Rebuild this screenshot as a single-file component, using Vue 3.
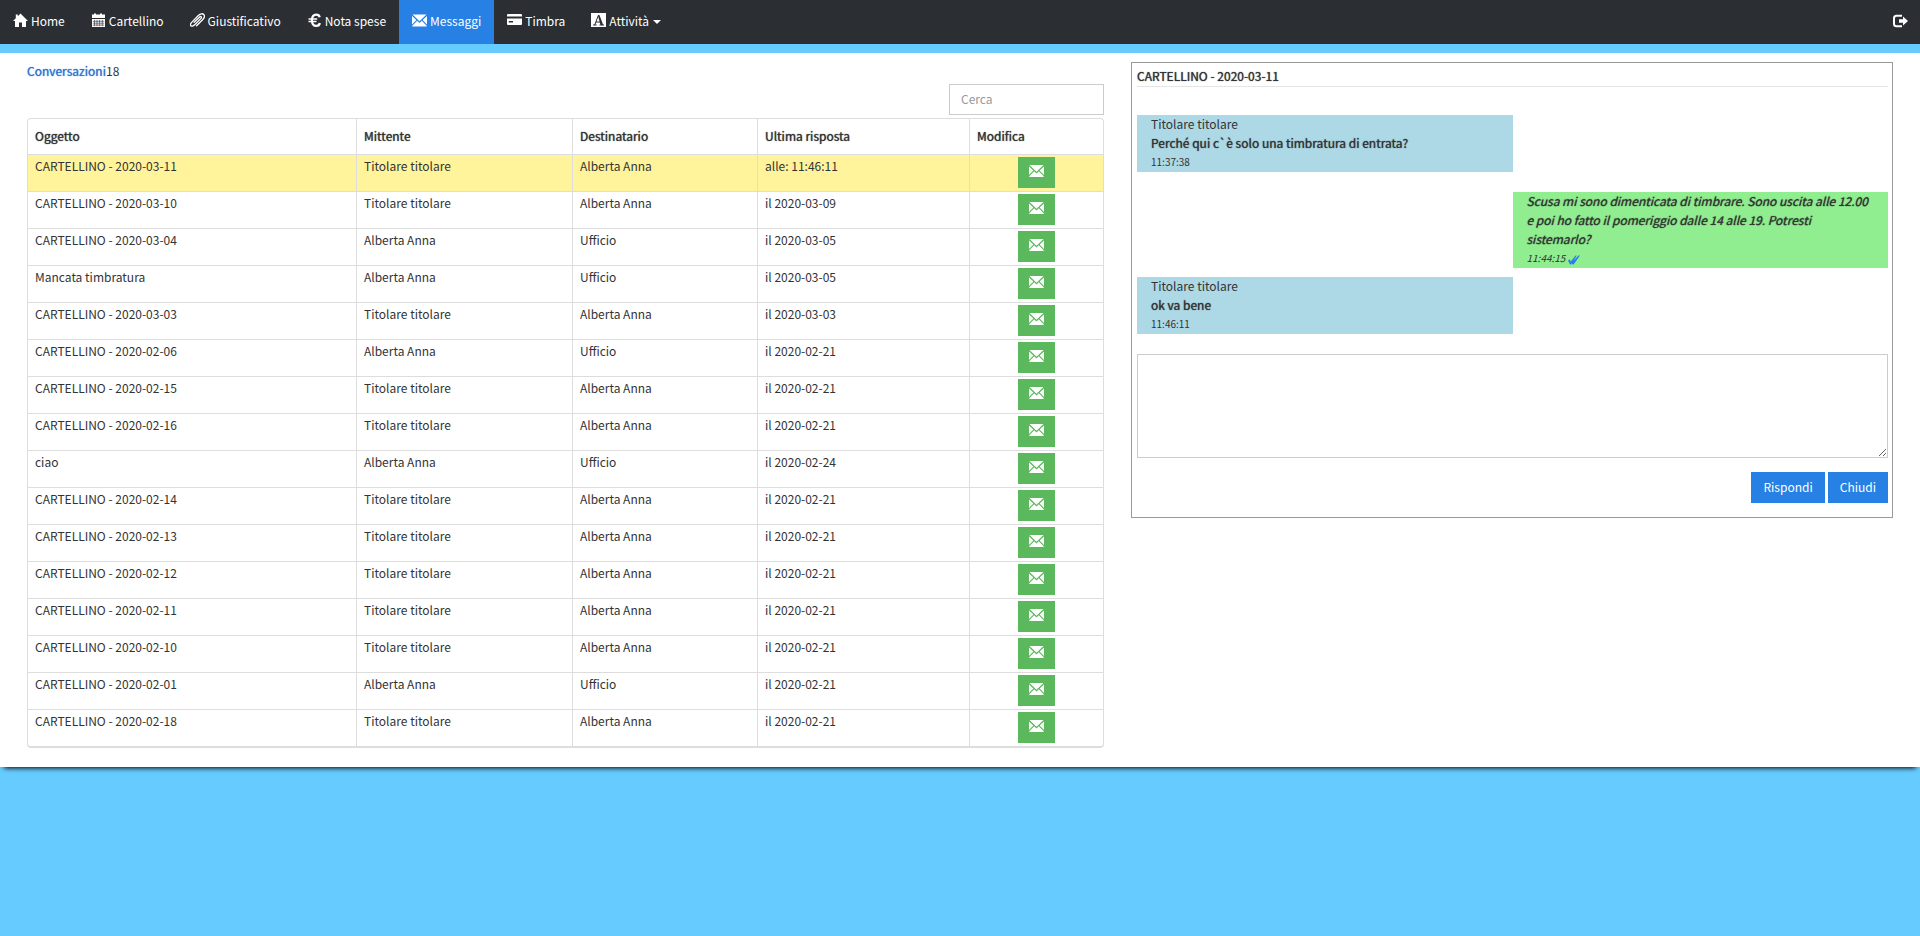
<script setup>
import { ref } from 'vue'

const navItems = [
  { label: 'Home', icon: 'home' },
  { label: 'Cartellino', icon: 'calendar' },
  { label: 'Giustificativo', icon: 'clip' },
  { label: 'Nota spese', icon: 'euro' },
  { label: 'Messaggi', icon: 'envelope', active: true },
  { label: 'Timbra', icon: 'card' },
  { label: 'Attività', icon: 'letter', menu: true }
]

const T = 'Titolare titolare'
const A = 'Alberta Anna'
const U = 'Ufficio'
const rows = [
  ['CARTELLINO - 2020-03-11', T, A, 'alle: 11:46:11'],
  ['CARTELLINO - 2020-03-10', T, A, 'il 2020-03-09'],
  ['CARTELLINO - 2020-03-04', A, U, 'il 2020-03-05'],
  ['Mancata timbratura', A, U, 'il 2020-03-05'],
  ['CARTELLINO - 2020-03-03', T, A, 'il 2020-03-03'],
  ['CARTELLINO - 2020-02-06', A, U, 'il 2020-02-21'],
  ['CARTELLINO - 2020-02-15', T, A, 'il 2020-02-21'],
  ['CARTELLINO - 2020-02-16', T, A, 'il 2020-02-21'],
  ['ciao', A, U, 'il 2020-02-24'],
  ['CARTELLINO - 2020-02-14', T, A, 'il 2020-02-21'],
  ['CARTELLINO - 2020-02-13', T, A, 'il 2020-02-21'],
  ['CARTELLINO - 2020-02-12', T, A, 'il 2020-02-21'],
  ['CARTELLINO - 2020-02-11', T, A, 'il 2020-02-21'],
  ['CARTELLINO - 2020-02-10', T, A, 'il 2020-02-21'],
  ['CARTELLINO - 2020-02-01', A, U, 'il 2020-02-21'],
  ['CARTELLINO - 2020-02-18', T, A, 'il 2020-02-21']
]
const headers = ['Oggetto', 'Mittente', 'Destinatario', 'Ultima risposta', 'Modifica']
const search = ref('')
const reply = ref('')
</script>

<template>
  <div class="app">
    <nav class="navbar">
      <ul class="nav">
        <li v-for="item in navItems" :key="item.label">
          <a href="#" class="nav-link" :class="{ active: item.active }">
            <svg class="icon" viewBox="0 0 15 15" aria-hidden="true">
              <path v-if="item.icon === 'home'" fill="#fff" d="M7.5 0.5L15 8H13V14H9V9.500H6V14H2V8H0L2.800 5.200V1.500H4.800V3.200Z" />
              <template v-else-if="item.icon === 'calendar'">
                <path fill="#fff" d="M1 1.500H3V0.500H5V1.500H9V0.500H11V1.500H14V5H1Z M1 6H14V14H1Z" />
                <path stroke="#2b2e33" stroke-width="0.6" fill="none" d="M3.500 6.800V13.200M6 6.800V13.200M8.600 6.800V13.200M11.300 6.800V13.200M1.800 8.300H13.200M1.800 10.200H13.200M1.800 12.100H13.200" />
              </template>
              <path v-else-if="item.icon === 'clip'" fill="none" stroke="#fff" stroke-width="1.3" stroke-linecap="round" d="M4.200 9.300L9.600 4C10.700 2.900 12.100 4.200 11 5.400L5 11.500C3.500 13 1.600 13.700 0.900 12.800C0.100 11.900 0.700 10.300 1.900 9.100L8.600 2.300C10.500 0.500 12.600 0.300 13.700 1.500C14.800 2.700 14.400 4.800 12.800 6.500L6.600 12.700" />
              <g v-else-if="item.icon === 'euro'" fill="none" stroke="#fff">
                <path stroke-width="2.2" d="M12.700 4.200C12.300 2.400 11.100 1.600 9.300 1.600C6.400 1.600 4.900 3.800 4.900 7.200C4.900 10.700 6.400 12.900 9.300 12.900C11.200 12.900 12.500 12 12.800 10" />
                <path stroke-width="1.3" d="M1.500 6H10.200M1.500 8.500H9.500" />
              </g>
              <path v-else-if="item.icon === 'envelope'" fill="#fff" d="M0.500 1.500H14.500L7.500 8.300Z M0 2.900L4.400 7.100L0 11.500Z M15 2.900L10.600 7.100L15 11.500Z M5.200 7.800L7.500 10L9.800 7.800L14.700 12.700V13.500H0.300V12.700Z" />
              <path v-else-if="item.icon === 'card'" fill="#fff" fill-rule="evenodd" d="M1 1H14Q15 1 15 2V3.500H0V2Q0 1 1 1Z M0 5.500H15V11Q15 12 14 12H1Q0 12 0 11Z M1.800 8V9.500H6V8Z" />
              <template v-else>
                <path fill="#fff" d="M0 0H15V14H0Z" />
                <path fill="none" stroke="#2b2e33" stroke-width="1" d="M2 12H5.700M8.500 12H13M3.700 12L7.300 2.500M5 9H9" />
                <path fill="#2b2e33" d="M6.800 2H8.400L12.200 12H9.500Z" />
              </template>
            </svg>
            <span>{{ item.label }}</span>
            <span v-if="item.menu" class="caret"></span>
          </a>
        </li>
      </ul>
      <a href="#" class="logout" aria-label="Esci">
        <svg class="icon" viewBox="0 0 15 15" aria-hidden="true">
          <path fill="none" stroke="#fff" stroke-width="2" d="M9 1.800H3.500Q1 1.800 1 4.300V9.700Q1 12.200 3.500 12.200H9" />
          <path fill="#fff" d="M6 5.200H10V2.500L15 7L10 11.500V8.800H6Z" />
        </svg>
      </a>
    </nav>

    <main class="content">
      <section class="conversations">
        <div class="title"><a href="#">Conversazioni</a><span>18</span></div>
        <div class="search-row">
          <input v-model="search" class="search" type="text" placeholder="Cerca" aria-label="Cerca" />
        </div>
        <div class="table-box">
          <table>
            <colgroup>
              <col class="c-subject" /><col class="c-from" /><col class="c-to" /><col class="c-last" /><col />
            </colgroup>
            <thead>
              <tr><th v-for="h in headers" :key="h" scope="col">{{ h }}</th></tr>
            </thead>
            <tbody>
              <tr v-for="(row, i) in rows" :key="row[0]" :class="{ selected: i === 0 }">
                <td v-for="(cell, j) in row" :key="j">{{ cell }}</td>
                <td class="edit">
                  <button type="button" class="open" :aria-label="'Apri ' + row[0]">
                    <svg class="mail" viewBox="0 0 15 12" aria-hidden="true">
                      <path fill="#fff" d="M0.500 0H14.500L7.500 6.800Z M0 1.400L4.400 5.600L0 10Z M15 1.400L10.600 5.600L15 10Z M5.200 6.300L7.500 8.500L9.800 6.300L14.700 11.200V12H0.300V11.200Z" />
                    </svg>
                  </button>
                </td>
              </tr>
            </tbody>
          </table>
        </div>
      </section>

      <section class="thread">
        <h2>CARTELLINO - 2020-03-11</h2>
        <article class="message received">
          <div>Titolare titolare</div>
          <strong>Perché qui c`è solo una timbratura di entrata?</strong>
          <time>11:37:38</time>
        </article>
        <article class="message sent">
          <strong>Scusa mi sono dimenticata di timbrare. Sono uscita alle 12.00 e poi ho fatto il pomeriggio dalle 14 alle 19. Potresti sistemarlo?</strong>
          <time>11:44:15
            <svg class="ticks" viewBox="0 0 12 10" aria-hidden="true">
              <path fill="#2780e3" d="M0 5.500L1.600 4.300L2.800 6.400L7.500 0.500H8.800L5.500 5.700L10.500 0.500H12L5.600 9.500H4.400L3.900 8.200L3 9.500H2Z" />
            </svg>
          </time>
        </article>
        <article class="message received">
          <div>Titolare titolare</div>
          <strong>ok va bene</strong>
          <time>11:46:11</time>
        </article>
        <textarea v-model="reply" class="reply" aria-label="Risposta"></textarea>
        <div class="actions">
          <button type="button" class="primary">Rispondi</button>
          <button type="button" class="primary">Chiudi</button>
        </div>
      </section>
    </main>
  </div>
</template>

<style>
body {
  background: #66ccff;
}
</style>

<style scoped>
.app {
  min-height: 100vh;
  background: #66ccff;
  font-family: "Source Sans Pro", "Noto Sans CJK SC", sans-serif;
  font-size: 12px;
  line-height: 19px;
  color: #333;
}
.app * {
  box-sizing: border-box;
}
a {
  text-decoration: none;
}
button,
input,
textarea {
  font: inherit;
  border-radius: 0;
}
.navbar {
  display: flex;
  justify-content: space-between;
  align-items: center;
  height: 44px;
  background: #2b2e33;
}
.nav {
  display: flex;
  margin: 0;
  padding: 0;
  list-style: none;
}
.nav-link {
  display: flex;
  align-items: center;
  gap: 3px;
  height: 44px;
  padding: 0 13px 4px;
  color: #fff;
}
.nav-link.active {
  background: #2780e3;
}
.icon {
  display: block;
  width: 15px;
  height: 15px;
}
.caret {
  margin: 4px 0 0 1px;
  border: 4px solid transparent;
  border-top-color: #fff;
  border-bottom: 0;
}
.logout {
  padding: 0 12px 2px;
}
.content {
  display: grid;
  grid-template-columns: 1077fr 762fr;
  align-items: start;
  gap: 27px;
  margin-top: 9px;
  padding: 8px 27px 19px;
  background: #fff;
  box-shadow: 0 5px 5px -4px #000;
}
/* Emphasis keeps the regular letter widths and thickens the strokes. */
.title a,
th,
h2,
.message strong {
  font-weight: 400;
  text-shadow: 0 0 1px currentColor;
}
.title a {
  color: #2f74d0;
}
.search-row {
  display: flex;
  justify-content: flex-end;
  margin: 4px 0 3px;
}
.search {
  width: 155px;
  height: 31px;
  padding: 0 11px 2px;
  border: 1px solid #ccc;
  color: #333;
  outline: 0;
}
.search::placeholder {
  color: #999;
}
.table-box {
  border: 1px solid #ddd;
  border-bottom-width: 2px;
  border-radius: 4px;
  overflow: hidden;
}
table {
  width: 100%;
  table-layout: fixed;
  border-collapse: separate;
  border-spacing: 0;
}
.c-subject { width: 329px; }
.c-from { width: 216px; }
.c-to { width: 185px; }
.c-last { width: 212px; }
th,
td {
  padding: 1px 7px;
  text-align: left;
  vertical-align: top;
  border-right: 1px solid #ddd;
}
th {
  height: 35px;
  padding-top: 7px;
}
td {
  height: 37px;
  border-top: 1px solid #ddd;
}
th:last-child,
td:last-child {
  border-right: 0;
}
.selected td {
  background: #fff49c;
}
td.edit {
  padding-top: 2px;
  text-align: center;
}
.open {
  display: inline-flex;
  justify-content: center;
  width: 37px;
  height: 31px;
  padding: 8px 0 0;
  border: 0;
  background: #5cb85c;
}
.mail {
  width: 15px;
  height: 12px;
}
.thread {
  margin-top: 1px;
  border: 1px solid #999;
  padding: 4px 4px 14px 5px;
}
h2 {
  margin: 0 0 28px;
  padding-bottom: 2px;
  border-bottom: 1px solid #e5e5e5;
  font-size: 12px;
  line-height: 17px;
}
.message {
  display: flow-root;
  width: 50%;
  padding: 0 14px 1px;
}
.message strong,
.message time {
  display: block;
}
.message > :first-child {
  margin-top: -1px;
}
.received {
  background: #add8e6;
}
.sent {
  margin: 20px 0 9px auto;
  background: #90ee90;
  font-style: italic;
}
.message time {
  font-size: 10px;
}
.ticks {
  width: 12px;
  height: 10px;
  vertical-align: -3px;
}
.reply {
  display: block;
  width: 100%;
  height: 104px;
  margin-top: 20px;
  border: 1px solid #ccc;
  resize: vertical;
  outline: 0;
}
.actions {
  display: flex;
  justify-content: flex-end;
  gap: 3px;
  margin-top: 14px;
}
.primary {
  height: 31px;
  padding: 0 12px 2px;
  border: 0;
  background: #2780e3;
  color: #fff;
}
</style>
